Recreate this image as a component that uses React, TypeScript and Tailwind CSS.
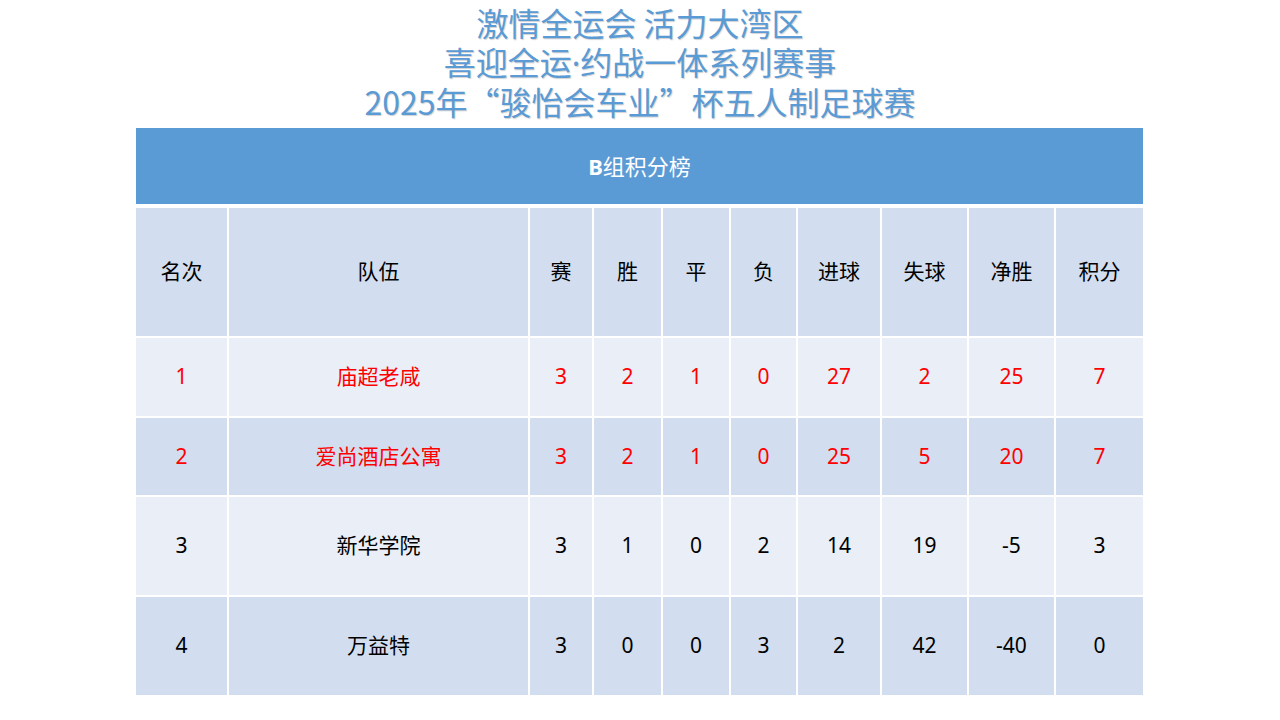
const columns = ["名次", "队伍", "赛", "胜", "平", "负", "进球", "失球", "净胜", "积分"];

const teams = [
  { rank: 1, name: "庙超老咸", played: 3, win: 2, draw: 1, loss: 0, gf: 27, ga: 2, gd: 25, pts: 7, top: true },
  { rank: 2, name: "爱尚酒店公寓", played: 3, win: 2, draw: 1, loss: 0, gf: 25, ga: 5, gd: 20, pts: 7, top: true },
  { rank: 3, name: "新华学院", played: 3, win: 1, draw: 0, loss: 2, gf: 14, ga: 19, gd: -5, pts: 3, top: false },
  { rank: 4, name: "万益特", played: 3, win: 0, draw: 0, loss: 3, gf: 2, ga: 42, gd: -40, pts: 0, top: false },
];

const rowHeights = ["h-[78px]", "h-[77px]", "h-[98px]", "h-[98px]"];
const rowColors = ["bg-[#e9eef7]", "bg-[#d2deef]", "bg-[#e9eef7]", "bg-[#d2deef]"];

const gridCols =
  "grid grid-cols-[91px_299px_62px_67px_66px_65px_82px_85px_85px_87px] gap-x-[2px]";

export default function App() {
  return (
    <div
      className="w-[1280px] h-[720px] bg-white overflow-hidden"
      style={{ fontFamily: '"Noto Sans", "Noto Sans CJK SC", sans-serif' }}
    >
      {/* Title */}
      <div
        className="h-[128px] flex flex-col items-center pt-[3px] text-[32px] leading-[39px] text-[#5b9bd5] [text-shadow:1px_1px_1px_rgba(0,0,0,0.18)]"
        style={{ fontFamily: '"Noto Sans CJK SC", sans-serif' }}
      >
        <div>激情全运会 活力大湾区</div>
        <div>
          喜迎全运<span style={{ fontFamily: '"Noto Sans", sans-serif' }}>·</span>约战一体系列赛事
        </div>
        <div>2025年“骏怡会车业”杯五人制足球赛</div>
      </div>

      {/* Table */}
      <div className="ml-[136px] w-[1007px] flex flex-col gap-y-[2px]">
        <div className="h-[76px] bg-[#5b9bd5] flex items-center justify-center text-white text-[22px] mb-[2px]">
          <span className="font-bold">B</span>
          <span>组积分榜</span>
        </div>

        <div className={`${gridCols} h-[128px]`}>
          {columns.map((c) => (
            <div
              key={c}
              className="bg-[#d2deef] flex items-center justify-center text-[21px] text-black"
            >
              {c}
            </div>
          ))}
        </div>

        {teams.map((t, i) => {
          const values = [t.rank, t.name, t.played, t.win, t.draw, t.loss, t.gf, t.ga, t.gd, t.pts];
          return (
            <div key={t.rank} className={`${gridCols} ${rowHeights[i]}`}>
              {values.map((v, j) => (
                <div
                  key={j}
                  className={`${rowColors[i]} flex items-center justify-center text-[21px] ${
                    t.top ? "text-[#ff0000]" : "text-black"
                  }`}
                >
                  {v}
                </div>
              ))}
            </div>
          );
        })}
      </div>
    </div>
  );
}
